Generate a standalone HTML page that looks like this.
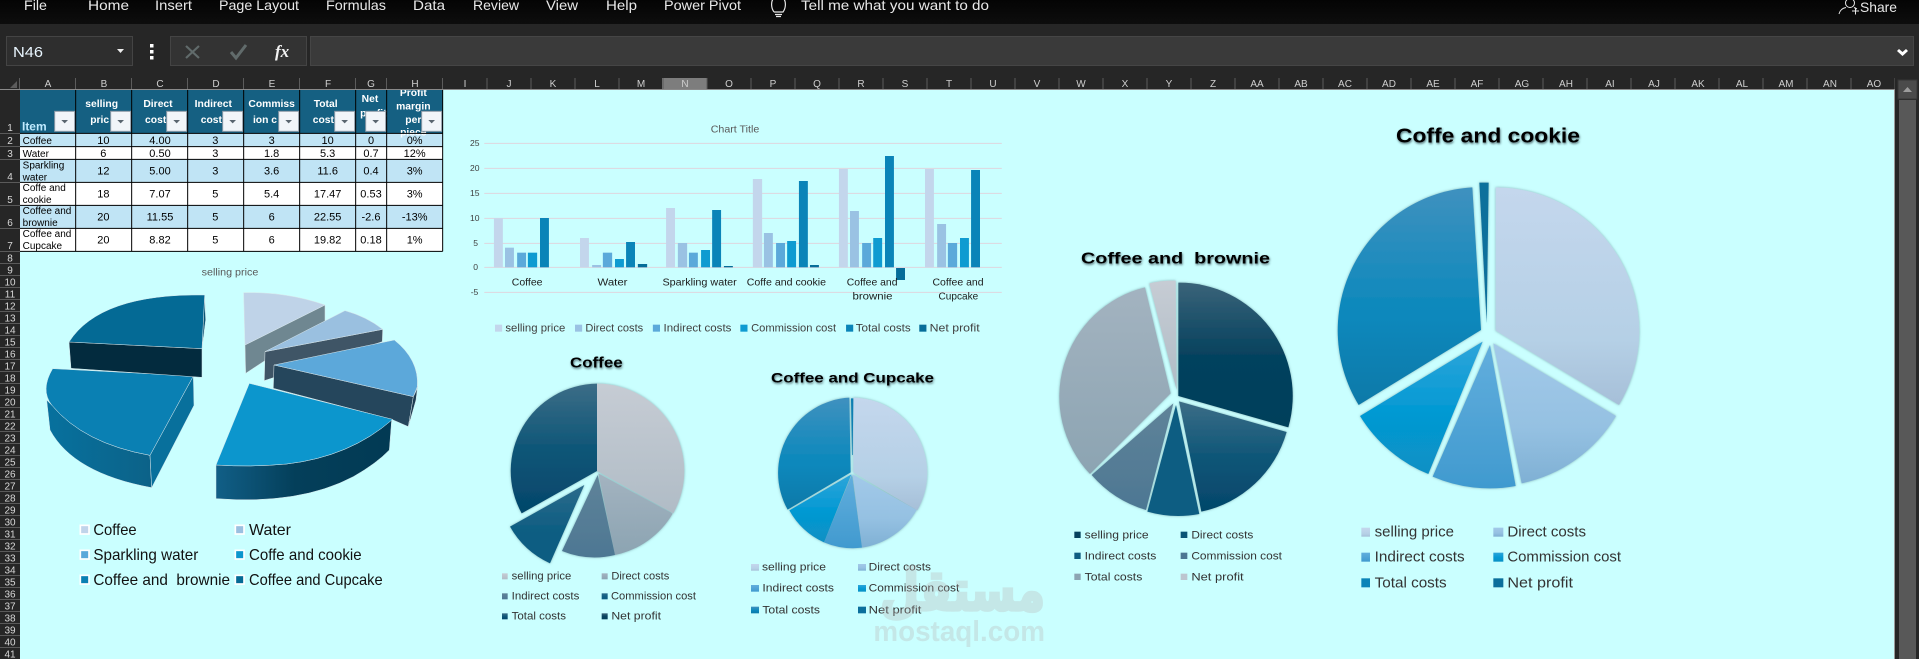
<!DOCTYPE html>
<html><head><meta charset="utf-8"><title>Excel</title>
<style>
html,body{margin:0;padding:0;width:1919px;height:659px;overflow:hidden;background:#262626}
svg{display:block;position:absolute;left:0;top:0}
text{font-family:"Liberation Sans",sans-serif}
.m{fill:#e8e8e8;font-size:14px}
.c{fill:#cfcfcf;font-size:10px;text-anchor:middle}
.r{fill:#d8d8d8;font-size:10px;text-anchor:middle}
.d{fill:#000;font-size:33px;text-anchor:middle}
.i{fill:#000;font-size:30px}
.h{fill:#fff;font-size:31px;font-weight:bold;text-anchor:middle}
.g{fill:#404040}
.t{fill:#000;font-weight:bold;filter:url(#ts)}
</style></head><body>
<svg width="1919" height="659" viewBox="0 0 1919 659" xmlns="http://www.w3.org/2000/svg">
<defs>
<linearGradient id="tb" x1="0" y1="0" x2="0" y2="1"><stop offset="0" stop-color="#040404"/><stop offset="1" stop-color="#0d0d0d"/></linearGradient>
<filter id="ts" x="-20%" y="-50%" width="140%" height="220%"><feDropShadow dx="2" dy="4" stdDeviation="3" flood-color="#2c3a40" flood-opacity=".75"/></filter>
<filter id="ps" x="-10%" y="-10%" width="120%" height="120%"><feDropShadow dx="0" dy="0" stdDeviation="4" flood-color="#4d7c84" flood-opacity=".6"/></filter>
<linearGradient id="a1" x1="0" y1="0" x2="0" y2="1"><stop offset="0" stop-color="#c6ccd4"/><stop offset="1" stop-color="#b0bcc6"/></linearGradient>
<linearGradient id="a2" x1="0" y1="0" x2="0" y2="1"><stop offset="0" stop-color="#a3b3c0"/><stop offset="1" stop-color="#8ca4b2"/></linearGradient>
<linearGradient id="a3" x1="0" y1="0" x2="0" y2="1"><stop offset="0" stop-color="#5f8399"/><stop offset="1" stop-color="#4d7793"/></linearGradient>
<linearGradient id="a4" x1="0" y1="0" x2="0" y2="1"><stop offset="0" stop-color="#2b6b8b"/><stop offset=".6" stop-color="#0d5d82"/><stop offset="1" stop-color="#0f5d82"/></linearGradient>
<linearGradient id="a5" x1="0" y1="0" x2="0" y2="1"><stop offset="0" stop-color="#3c6d87"/><stop offset=".55" stop-color="#0a5476"/><stop offset="1" stop-color="#05466a"/></linearGradient>
<linearGradient id="a6" x1="0" y1="0" x2="0" y2="1"><stop offset="0" stop-color="#3a6379"/><stop offset=".5" stop-color="#06425e"/><stop offset="1" stop-color="#053f5a"/></linearGradient>
<linearGradient id="b1" x1="0" y1="0" x2="0" y2="1"><stop offset="0" stop-color="#c4d7ed"/><stop offset=".7" stop-color="#b5d0e6"/><stop offset="1" stop-color="#a6bfd8"/></linearGradient>
<linearGradient id="b2" x1="0" y1="0" x2="0" y2="1"><stop offset="0" stop-color="#a2c9e9"/><stop offset=".6" stop-color="#95c1e2"/><stop offset="1" stop-color="#7fb0d4"/></linearGradient>
<linearGradient id="b3" x1="0" y1="0" x2="0" y2="1"><stop offset="0" stop-color="#62aedd"/><stop offset="1" stop-color="#409acf"/></linearGradient>
<linearGradient id="b4" x1="0" y1="0" x2="0" y2="1"><stop offset="0" stop-color="#2ea5da"/><stop offset=".5" stop-color="#059ad4"/><stop offset="1" stop-color="#0890c4"/></linearGradient>
<linearGradient id="b5" x1="0" y1="0" x2="0" y2="1"><stop offset="0" stop-color="#3f91bf"/><stop offset=".6" stop-color="#0988bc"/><stop offset="1" stop-color="#0b79a8"/></linearGradient>
<linearGradient id="s3" x1="0" y1="0" x2="1" y2="0"><stop offset="0" stop-color="#115f87"/><stop offset=".45" stop-color="#043f5a"/><stop offset="1" stop-color="#023a54"/></linearGradient>
<linearGradient id="s4" x1="0" y1="0" x2="1" y2="0"><stop offset="0" stop-color="#07719e"/><stop offset="1" stop-color="#0c6288"/></linearGradient>
<clipPath id="tc"><rect x="60" y="30" width="1268" height="484"/></clipPath>
</defs>

<!-- top bar -->
<rect width="1919" height="24" fill="url(#tb)"/>
<rect y="24" width="1919" height="54" fill="#262626"/>
<g class="mt">
<text class="m" x="24" y="10" textLength="23" lengthAdjust="spacingAndGlyphs">File</text>
<text class="m" x="88" y="10" textLength="41" lengthAdjust="spacingAndGlyphs">Home</text>
<text class="m" x="155" y="10" textLength="37" lengthAdjust="spacingAndGlyphs">Insert</text>
<text class="m" x="219" y="10" textLength="80" lengthAdjust="spacingAndGlyphs">Page Layout</text>
<text class="m" x="326" y="10" textLength="60" lengthAdjust="spacingAndGlyphs">Formulas</text>
<text class="m" x="413" y="10" textLength="32" lengthAdjust="spacingAndGlyphs">Data</text>
<text class="m" x="473" y="10" textLength="46" lengthAdjust="spacingAndGlyphs">Review</text>
<text class="m" x="546" y="10" textLength="32" lengthAdjust="spacingAndGlyphs">View</text>
<text class="m" x="606" y="10" textLength="31" lengthAdjust="spacingAndGlyphs">Help</text>
<text class="m" x="664" y="10" textLength="77" lengthAdjust="spacingAndGlyphs">Power Pivot</text>
<text class="m" x="801" y="10" textLength="188" lengthAdjust="spacingAndGlyphs">Tell me what you want to do</text>
<text class="m" x="1860" y="12" textLength="37" lengthAdjust="spacingAndGlyphs">Share</text>
</g>
<path d="M774 12 C771 8 771 2 773 -1 M784 -1 C786 2 786 8 783 12 L774 12" fill="none" stroke="#e8e8e8" stroke-width="1.2"/>
<path d="M775 14.5H782M776 16.5H781" stroke="#e8e8e8" stroke-width="1.2"/>
<circle cx="1850" cy="3" r="4.5" fill="none" stroke="#e8e8e8" stroke-width="1"/>
<path d="M1839 14 C1840 10 1843 8 1846 7.5 M1854 7.5 C1855 8 1856 8.5 1857 9" fill="none" stroke="#e8e8e8" stroke-width="1"/>
<path d="M1852 11H1859M1855.5 7.5V14.5" stroke="#e8e8e8" stroke-width="1"/>

<!-- formula bar -->
<rect x="6.5" y="36.5" width="126" height="29" fill="#2e2e2e" stroke="#444"/>
<text x="13" y="57" font-size="14.5" fill="#e9f6ff" textLength="30" lengthAdjust="spacingAndGlyphs">N46</text>
<path d="M117 49H124L120.500 53Z" fill="#eee"/>
<rect x="150" y="44" width="3.500" height="3.500" fill="#fff"/><rect x="150" y="50" width="3.500" height="3.500" fill="#fff"/><rect x="150" y="56" width="3.500" height="3.500" fill="#fff"/>
<rect x="170.500" y="36.500" width="136" height="29" fill="#333" stroke="#444"/>
<path d="M186 46L199 58M199 46L186 58" stroke="#616b6b" stroke-width="2.200"/>
<path d="M231 52L236 58L246 45" fill="none" stroke="#616b6b" stroke-width="3"/>
<text x="275" y="57" font-size="17" fill="#f2f2f2" style="font-family:'Liberation Serif',serif;font-style:italic;font-weight:bold">fx</text>
<rect x="310.500" y="36.500" width="1603" height="29" fill="#3a3a3a" stroke="#454545"/>
<path d="M1899 49L1902.500 52L1906 49L1908 51L1902.500 56L1897 51Z" fill="#fff"/>

<!-- column headers -->
<rect x="662" y="78" width="45" height="11" fill="#7d7d7d"/>
<path d="M17 81V88H10Z" fill="#5b5b5b"/>
<g stroke="#5c5c5c"><path d="M19.500 78V89M75.500 78V89M131.500 78V89M187.500 78V89M243.500 78V89M299.500 78V89M355.500 78V89M386.500 78V89M442.500 78V89M487 78V89M531 78V89M575 78V89M619 78V89M663 78V89M707 78V89M751 78V89M795 78V89M839 78V89M883 78V89M927 78V89M971 78V89M1015 78V89M1059 78V89M1103 78V89M1147 78V89M1191 78V89M1235 78V89M1279 78V89M1323 78V89M1367 78V89M1411 78V89M1455 78V89M1499 78V89M1543 78V89M1587 78V89M1631 78V89M1675 78V89M1719 78V89M1763 78V89M1807 78V89M1851 78V89M1895 78V89"/></g>
<g class="cols">
<text class="c" x="48" y="87">A</text><text class="c" x="104" y="87">B</text><text class="c" x="160" y="87">C</text><text class="c" x="216" y="87">D</text><text class="c" x="272" y="87">E</text><text class="c" x="328" y="87">F</text><text class="c" x="371" y="87">G</text><text class="c" x="415" y="87">H</text>
<text class="c" x="465" y="87">I</text><text class="c" x="509" y="87">J</text><text class="c" x="553" y="87">K</text><text class="c" x="597" y="87">L</text><text class="c" x="641" y="87">M</text><text class="c" x="685" y="87">N</text><text class="c" x="729" y="87">O</text><text class="c" x="773" y="87">P</text><text class="c" x="817" y="87">Q</text><text class="c" x="861" y="87">R</text><text class="c" x="905" y="87">S</text><text class="c" x="949" y="87">T</text><text class="c" x="993" y="87">U</text><text class="c" x="1037" y="87">V</text><text class="c" x="1081" y="87">W</text><text class="c" x="1125" y="87">X</text><text class="c" x="1169" y="87">Y</text><text class="c" x="1213" y="87">Z</text><text class="c" x="1257" y="87">AA</text><text class="c" x="1301" y="87">AB</text><text class="c" x="1345" y="87">AC</text><text class="c" x="1389" y="87">AD</text><text class="c" x="1433" y="87">AE</text><text class="c" x="1477" y="87">AF</text><text class="c" x="1522" y="87">AG</text><text class="c" x="1566" y="87">AH</text><text class="c" x="1610" y="87">AI</text><text class="c" x="1654" y="87">AJ</text><text class="c" x="1698" y="87">AK</text><text class="c" x="1742" y="87">AL</text><text class="c" x="1786" y="87">AM</text><text class="c" x="1830" y="87">AN</text><text class="c" x="1874" y="87">AO</text>
</g>
<rect x="0" y="89" width="1895" height="1" fill="#8a8a8a"/>

<!-- sheet -->
<rect x="20" y="90" width="1874" height="569" fill="#CAFFFF"/>
<rect x="1894" y="90" width="1" height="569" fill="#9a9a9a"/>

<!-- scrollbar -->
<rect x="1895" y="78" width="24" height="581" fill="#262626"/>
<rect x="1898" y="80" width="19" height="19" fill="#4b4b4b" stroke="#353535"/>
<path d="M1903 92L1907.500 87L1912 92Z" fill="#9c9c9c"/>
<rect x="1899" y="100" width="17" height="559" fill="#585858"/>

<!-- row header -->
<g stroke="#5a5a5a"><path d="M0 133.500H20M0 146.500H20M0 159.500H20M0 182.500H20M0 205.500H20M0 228.500H20M0 251.500H20M0 263.500H20M0 275.500H20M0 287.500H20M0 299.500H20M0 311.500H20M0 323.500H20M0 335.500H20M0 347.500H20M0 359.500H20M0 371.500H20M0 383.500H20M0 395.500H20M0 407.500H20M0 419.500H20M0 431.500H20M0 443.500H20M0 455.500H20M0 467.500H20M0 479.500H20M0 491.500H20M0 503.500H20M0 515.500H20M0 527.500H20M0 539.500H20M0 551.500H20M0 563.500H20M0 575.500H20M0 587.500H20M0 599.500H20M0 611.500H20M0 623.500H20M0 635.500H20M0 647.500H20"/></g>
<g>
<text class="r" x="10" y="131">1</text><text class="r" x="10" y="144">2</text><text class="r" x="10" y="157">3</text><text class="r" x="10" y="180">4</text><text class="r" x="10" y="203">5</text><text class="r" x="10" y="226">6</text><text class="r" x="10" y="249">7</text>
<text class="r" x="10" y="261.500">8</text><text class="r" x="10" y="273.500">9</text><text class="r" x="10" y="285.500">10</text><text class="r" x="10" y="297.500">11</text><text class="r" x="10" y="309.500">12</text><text class="r" x="10" y="321.500">13</text><text class="r" x="10" y="333.500">14</text><text class="r" x="10" y="345.500">15</text><text class="r" x="10" y="357.500">16</text><text class="r" x="10" y="369.500">17</text><text class="r" x="10" y="381.500">18</text><text class="r" x="10" y="393.500">19</text><text class="r" x="10" y="405.500">20</text><text class="r" x="10" y="417.500">21</text><text class="r" x="10" y="429.500">22</text><text class="r" x="10" y="441.500">23</text><text class="r" x="10" y="453.500">24</text><text class="r" x="10" y="465.500">25</text><text class="r" x="10" y="477.500">26</text><text class="r" x="10" y="489.500">27</text><text class="r" x="10" y="501.500">28</text><text class="r" x="10" y="513.500">29</text><text class="r" x="10" y="525.500">30</text><text class="r" x="10" y="537.500">31</text><text class="r" x="10" y="549.500">32</text><text class="r" x="10" y="561.500">33</text><text class="r" x="10" y="573.500">34</text><text class="r" x="10" y="585.500">35</text><text class="r" x="10" y="597.500">36</text><text class="r" x="10" y="609.500">37</text><text class="r" x="10" y="621.500">38</text><text class="r" x="10" y="633.500">39</text><text class="r" x="10" y="645.500">40</text><text class="r" x="10" y="657.500">41</text>
</g>

<!-- table -->
<g transform="translate(0,80) scale(.33333)">
<rect x="60" y="30" width="1268" height="130" fill="#156082"/>
<rect x="60" y="160" width="1268" height="40" fill="#C0E4F5"/>
<rect x="60" y="200" width="1268" height="38" fill="#fff"/>
<rect x="60" y="238" width="1268" height="69" fill="#C0E4F5"/>
<rect x="60" y="307" width="1268" height="69" fill="#fff"/>
<rect x="60" y="376" width="1268" height="69" fill="#C0E4F5"/>
<rect x="60" y="445" width="1268" height="69" fill="#fff"/>
<g clip-path="url(#tc)">
<text x="66" y="152" font-size="36" font-weight="bold" fill="#bfeaff" textLength="74" lengthAdjust="spacingAndGlyphs">Item</text>
<text class="h" x="305" y="81">selling</text><text class="h" x="299" y="129">pric</text>
<text class="h" x="474" y="81">Direct</text><text class="h" x="467" y="129">cost</text>
<text class="h" x="640" y="81">Indirect</text><text class="h" x="634" y="129">cost</text>
<text class="h" x="815" y="81">Commiss</text><text class="h" x="795" y="129">ion c</text>
<text class="h" x="977" y="81">Total</text><text class="h" x="970" y="129">cost</text>
<text class="h" x="1110" y="66">Net</text><text class="h" x="1120" y="110">profit</text>
<text class="h" x="1240" y="48">Profit</text><text class="h" x="1240" y="88">margin</text><text class="h" x="1240" y="129">per</text><text class="h" x="1240" y="166">piece</text>
</g>
<g fill="#f1f5f9" stroke="#8f9ca8" stroke-width="3">
<rect x="164" y="94" width="60" height="60"/><rect x="332" y="94" width="60" height="60"/><rect x="500" y="94" width="60" height="60"/><rect x="668" y="94" width="60" height="60"/><rect x="836" y="94" width="60" height="60"/><rect x="1004" y="94" width="60" height="60"/><rect x="1097" y="94" width="60" height="60"/><rect x="1265" y="94" width="60" height="60"/>
</g>
<g fill="#59656f"><path d="M184 120H204L194 130Z"/><path d="M352 120H372L362 130Z"/><path d="M520 120H540L530 130Z"/><path d="M688 120H708L698 130Z"/><path d="M856 120H876L866 130Z"/><path d="M1024 120H1044L1034 130Z"/><path d="M1117 120H1137L1127 130Z"/><path d="M1285 120H1305L1295 130Z"/></g>
<g stroke="#000" stroke-width="3" fill="none">
<path d="M60 160H1328M60 200H1328M60 238H1328M60 307H1328M60 376H1328M60 445H1328M60 514H1328"/>
<path d="M227 30V514M395 30V514M563 30V514M731 30V514M899 30V514M1067 30V514M1160 30V514M1328 30V514"/>
</g>
<text class="i" x="68" y="192">Coffee</text><text class="i" x="68" y="231">Water</text>
<text class="i" x="68" y="265">Sparkling</text><text class="i" x="68" y="301">water</text>
<text class="i" x="68" y="333">Coffe and</text><text class="i" x="68" y="369">cookie</text>
<text class="i" x="68" y="402">Coffee and</text><text class="i" x="68" y="438">brownie</text>
<text class="i" x="68" y="471">Coffee and</text><text class="i" x="68" y="507">Cupcake</text>
<text class="d" x="310" y="192">10</text><text class="d" x="480" y="192">4.00</text><text class="d" x="646" y="192">3</text><text class="d" x="815" y="192">3</text><text class="d" x="983" y="192">10</text><text class="d" x="1113" y="192">0</text><text class="d" x="1244" y="192">0%</text>
<text class="d" x="310" y="231">6</text><text class="d" x="480" y="231">0.50</text><text class="d" x="646" y="231">3</text><text class="d" x="815" y="231">1.8</text><text class="d" x="983" y="231">5.3</text><text class="d" x="1113" y="231">0.7</text><text class="d" x="1244" y="231">12%</text>
<text class="d" x="310" y="284">12</text><text class="d" x="480" y="284">5.00</text><text class="d" x="646" y="284">3</text><text class="d" x="815" y="284">3.6</text><text class="d" x="983" y="284">11.6</text><text class="d" x="1113" y="284">0.4</text><text class="d" x="1244" y="284">3%</text>
<text class="d" x="310" y="353">18</text><text class="d" x="480" y="353">7.07</text><text class="d" x="646" y="353">5</text><text class="d" x="815" y="353">5.4</text><text class="d" x="983" y="353">17.47</text><text class="d" x="1113" y="353">0.53</text><text class="d" x="1244" y="353">3%</text>
<text class="d" x="310" y="422">20</text><text class="d" x="480" y="422">11.55</text><text class="d" x="646" y="422">5</text><text class="d" x="815" y="422">6</text><text class="d" x="983" y="422">22.55</text><text class="d" x="1113" y="422">-2.6</text><text class="d" x="1244" y="422">-13%</text>
<text class="d" x="310" y="491">20</text><text class="d" x="480" y="491">8.82</text><text class="d" x="646" y="491">5</text><text class="d" x="815" y="491">6</text><text class="d" x="983" y="491">19.82</text><text class="d" x="1113" y="491">0.18</text><text class="d" x="1244" y="491">1%</text>
</g>

<!-- 3D pie -->
<g transform="translate(0,260) scale(.33333)">
<text x="605" y="47" font-size="30" fill="#595959" textLength="170" lengthAdjust="spacingAndGlyphs">selling price</text>
<g stroke="#d8e6ea" stroke-width="1.500">
<path d="M735 255L975 135L975 183L737 340Z" fill="#6f8791"/>
<path d="M735 255L731 98Q860 95 975 135Z" fill="#BFD3E8"/>
<path d="M795 275L1148 208L1147 245L793 362Z" fill="#3f5566"/>
<path d="M795 275L1035 152Q1100 170 1148 208Z" fill="#9AC0E0"/>
<path d="M822 315L1240 410L1225 500L1175 478L820 385Z" fill="#25465c"/>
<path d="M1240 410Q1250 392 1253 378L1248 420L1225 500Z" fill="#1d3d52"/>
<path d="M822 315L1183 240Q1258 300 1252 380L1240 410Z" fill="#5CA8DA"/>
<path d="M648 615L648 716Q900 735 1060 650Q1130 610 1168 570L1175 480Q1050 590 860 612Q750 622 648 615Z" fill="url(#s3)"/>
<path d="M748 370L1178 478Q1050 590 860 612Q750 622 648 615Z" fill="#0C96CD"/>
<path d="M140 420L150 510Q220 640 455 683L450 586Q250 550 155 435Z" fill="url(#s4)"/>
<path d="M450 586L580 348L582 436L455 683Z" fill="#08709c"/>
<path d="M158 326L580 348L450 586Q250 550 155 435Q120 390 158 326Z" fill="#0A80B3"/>
<path d="M207 246L606 266L606 352L213 325Z" fill="#032b3e"/>
<path d="M614 105L617 180L606 266Z" fill="#0a5474"/>
<path d="M207 246Q300 100 614 105L606 266Z" fill="#046a95"/>
</g>
<g stroke="#fff" stroke-width="5">
<rect x="241" y="796" width="26" height="26" fill="#C0D4EA"/><rect x="706" y="796" width="26" height="26" fill="#9AC0E0"/>
<rect x="241" y="871" width="26" height="26" fill="#5CA8DA"/><rect x="706" y="871" width="26" height="26" fill="#0C96CD"/>
<rect x="241" y="946" width="26" height="26" fill="#0A80B3"/><rect x="706" y="946" width="26" height="26" fill="#046a95"/>
</g>
<g font-size="47" fill="#111">
<text x="280" y="825" textLength="130" lengthAdjust="spacingAndGlyphs">Coffee</text>
<text x="747" y="825" textLength="126" lengthAdjust="spacingAndGlyphs">Water</text>
<text x="280" y="900" textLength="315" lengthAdjust="spacingAndGlyphs">Sparkling water</text>
<text x="747" y="900" textLength="338" lengthAdjust="spacingAndGlyphs">Coffe and cookie</text>
<text x="280" y="975" textLength="410" lengthAdjust="spacingAndGlyphs" xml:space="preserve">Coffee and  brownie</text>
<text x="747" y="975" textLength="401" lengthAdjust="spacingAndGlyphs">Coffee and Cupcake</text>
</g>
</g>

<!-- bar chart -->
<g transform="translate(460,110) scale(.35714,.33333)">
<text x="702" y="68" font-size="30" fill="#595959" textLength="136" lengthAdjust="spacingAndGlyphs">Chart Title</text>
<g stroke="#dfd6de" stroke-width="3"><path d="M68 100H1517M68 175H1517M68 250H1517M68 325H1517M68 400H1517M68 472H1517M68 547H1517"/></g>
<g font-size="24" fill="#404040">
<text x="28" y="108">25</text><text x="28" y="183">20</text><text x="28" y="258">15</text><text x="28" y="333">10</text><text x="37" y="408">5</text><text x="37" y="480">0</text><text x="30" y="555">-5</text>
</g>
<g fill="#C3D6EC"><rect x="95" y="325" width="25" height="147"/><rect x="336" y="384" width="25" height="88"/><rect x="577" y="294" width="25" height="178"/><rect x="820" y="207" width="26" height="265"/><rect x="1061" y="177" width="25" height="295"/><rect x="1302" y="177" width="25" height="295"/></g>
<g fill="#9AC2E3"><rect x="126" y="413" width="25" height="59"/><rect x="370" y="465" width="25" height="7"/><rect x="610" y="399" width="26" height="73"/><rect x="851" y="369" width="25" height="103"/><rect x="1092" y="303" width="25" height="169"/><rect x="1336" y="342" width="25" height="130"/></g>
<g fill="#5BA9DA"><rect x="160" y="428" width="25" height="44"/><rect x="400" y="428" width="26" height="44"/><rect x="641" y="428" width="25" height="44"/><rect x="885" y="399" width="25" height="73"/><rect x="1126" y="399" width="25" height="73"/><rect x="1366" y="399" width="26" height="73"/></g>
<g fill="#0E9BD1"><rect x="190" y="428" width="26" height="44"/><rect x="434" y="447" width="25" height="25"/><rect x="675" y="420" width="25" height="52"/><rect x="916" y="393" width="25" height="79"/><rect x="1157" y="384" width="25" height="88"/><rect x="1400" y="384" width="25" height="88"/></g>
<g fill="#0A84B8"><rect x="224" y="324" width="25" height="148"/><rect x="465" y="396" width="25" height="76"/><rect x="706" y="300" width="25" height="172"/><rect x="949" y="213" width="25" height="259"/><rect x="1190" y="138" width="25" height="334"/><rect x="1431" y="180" width="25" height="292"/></g>
<g fill="#056D99"><rect x="498" y="462" width="26" height="10"/><rect x="739" y="468" width="25" height="4"/><rect x="980" y="465" width="25" height="7"/><rect x="1221" y="474" width="25" height="36"/></g>
<g font-size="31" fill="#1c1c1c">
<text x="145" y="527" textLength="86" lengthAdjust="spacingAndGlyphs">Coffee</text>
<text x="385" y="527" textLength="84" lengthAdjust="spacingAndGlyphs">Water</text>
<text x="567" y="527" textLength="208" lengthAdjust="spacingAndGlyphs">Sparkling water</text>
<text x="803" y="527" textLength="222" lengthAdjust="spacingAndGlyphs">Coffe and cookie</text>
<text x="1083" y="527" textLength="142" lengthAdjust="spacingAndGlyphs">Coffee and</text>
<text x="1099" y="568" textLength="112" lengthAdjust="spacingAndGlyphs">brownie</text>
<text x="1323" y="527" textLength="143" lengthAdjust="spacingAndGlyphs">Coffee and</text>
<text x="1340" y="568" textLength="111" lengthAdjust="spacingAndGlyphs">Cupcake</text>
</g>
<rect x="98" y="644" width="20" height="21" fill="#C3D6EC"/><rect x="322" y="644" width="20" height="21" fill="#9AC2E3"/><rect x="540" y="644" width="20" height="21" fill="#5BA9DA"/><rect x="785" y="644" width="20" height="21" fill="#0E9BD1"/><rect x="1081" y="644" width="20" height="21" fill="#0A84B8"/><rect x="1286" y="644" width="20" height="21" fill="#056D99"/>
<g font-size="32" fill="#404040">
<text x="127" y="665" textLength="168" lengthAdjust="spacingAndGlyphs">selling price</text>
<text x="351" y="665" textLength="162" lengthAdjust="spacingAndGlyphs">Direct costs</text>
<text x="570" y="665" textLength="190" lengthAdjust="spacingAndGlyphs">Indirect costs</text>
<text x="815" y="665" textLength="238" lengthAdjust="spacingAndGlyphs">Commission cost</text>
<text x="1108" y="665" textLength="154" lengthAdjust="spacingAndGlyphs">Total costs</text>
<text x="1315" y="665" textLength="140" lengthAdjust="spacingAndGlyphs">Net profit</text>
</g>
</g>

<!-- Coffee pie -->
<g transform="translate(480,345) scale(.33333)">
<text class="t" x="270" y="68" font-size="44" textLength="158" lengthAdjust="spacingAndGlyphs">Coffee</text>
<g filter="url(#ps)">
<path d="M351 378L351 116A262 262 0 0 1 580 505Z" fill="url(#a1)"/>
<path d="M355 385L578 506A262 262 0 0 1 405 630Z" fill="url(#a2)"/>
<path d="M353 390L405 630A262 262 0 0 1 246 618Z" fill="url(#a3)"/>
<path d="M313 420L210 655A262 262 0 0 1 90 545Z" fill="url(#a4)"/>
<path d="M351 378L125 505A262 262 0 0 1 351 116Z" fill="url(#a5)"/>
</g>
<rect x="66" y="685" width="17" height="18" fill="url(#a1)"/><rect x="365" y="685" width="18" height="18" fill="url(#a2)"/>
<rect x="66" y="745" width="17" height="18" fill="url(#a3)"/><rect x="365" y="745" width="18" height="18" fill="url(#a4)"/>
<rect x="66" y="805" width="17" height="18" fill="url(#a5)"/><rect x="365" y="805" width="18" height="18" fill="url(#a6)"/>
<g font-size="32" fill="#333">
<text x="95" y="704" textLength="179" lengthAdjust="spacingAndGlyphs">selling price</text>
<text x="394" y="704" textLength="174" lengthAdjust="spacingAndGlyphs">Direct costs</text>
<text x="95" y="764" textLength="203" lengthAdjust="spacingAndGlyphs">Indirect costs</text>
<text x="393" y="764" textLength="255" lengthAdjust="spacingAndGlyphs">Commission cost</text>
<text x="95" y="824" textLength="163" lengthAdjust="spacingAndGlyphs">Total costs</text>
<text x="394" y="824" textLength="149" lengthAdjust="spacingAndGlyphs">Net profit</text>
</g>
</g>

<!-- Cupcake pie -->
<g transform="translate(730,355) scale(.33333)">
<text class="t" x="123" y="83" font-size="42" textLength="489" lengthAdjust="spacingAndGlyphs">Coffee and Cupcake</text>
<g filter="url(#ps)">
<path d="M370 352L370 128A226 226 0 0 1 562 466Z" fill="url(#b1)"/>
<path d="M368 358L560 465A226 226 0 0 1 396 578Z" fill="url(#b2)"/>
<path d="M366 358L396 578A226 226 0 0 1 282 562Z" fill="url(#b3)"/>
<path d="M364 358L282 562A226 226 0 0 1 178 466Z" fill="url(#b4)"/>
<path d="M362 352L173 464A226 226 0 0 1 358 128Z" fill="url(#b5)"/>
<path d="M366 300L363 130L370 130L368 300Z" fill="#0a7fb2"/>
</g>
<rect x="63" y="627" width="24" height="20" fill="url(#b1)"/><rect x="384" y="627" width="24" height="20" fill="url(#b2)"/>
<rect x="63" y="690" width="24" height="20" fill="url(#b3)"/><rect x="384" y="690" width="24" height="20" fill="url(#b4)"/>
<rect x="63" y="755" width="24" height="20" fill="url(#b5)"/><rect x="384" y="755" width="24" height="20" fill="#0b6f9c"/>
<g font-size="33" fill="#333">
<text x="96" y="647" textLength="192" lengthAdjust="spacingAndGlyphs">selling price</text>
<text x="416" y="647" textLength="187" lengthAdjust="spacingAndGlyphs">Direct costs</text>
<text x="97" y="710" textLength="215" lengthAdjust="spacingAndGlyphs">Indirect costs</text>
<text x="416" y="710" textLength="272" lengthAdjust="spacingAndGlyphs">Commission cost</text>
<text x="97" y="776" textLength="173" lengthAdjust="spacingAndGlyphs">Total costs</text>
<text x="416" y="776" textLength="158" lengthAdjust="spacingAndGlyphs">Net profit</text>
</g>
</g>

<!-- Brownie pie -->
<g transform="translate(1040,230) scale(.33333)">
<text class="t" x="123" y="100" font-size="46" textLength="567" lengthAdjust="spacingAndGlyphs" xml:space="preserve">Coffee and  brownie</text>
<g filter="url(#ps)">
<path d="M415 498L415 158A340 340 0 0 1 745 592Z" fill="url(#a6)"/>
<path d="M417 514L740 606A340 340 0 0 1 484 845Z" fill="url(#a5)"/>
<path d="M408 525L478 852A340 340 0 0 1 322 845Z" fill="#0f5d82"/>
<path d="M400 520L318 840A345 345 0 0 1 155 735Z" fill="url(#a3)"/>
<path d="M392 490L150 732A338 338 0 0 1 315 172Z" fill="url(#a2)"/>
<path d="M410 480L328 160A340 340 0 0 1 407 152Z" fill="url(#a1)"/>
</g>
<rect x="103" y="905" width="19" height="19" fill="#06425e"/><rect x="422" y="905" width="20" height="19" fill="#0a5476"/>
<rect x="103" y="968" width="19" height="19" fill="#0f5d82"/><rect x="422" y="968" width="20" height="19" fill="#4d7793"/>
<rect x="103" y="1031" width="19" height="19" fill="#8ca4b2"/><rect x="422" y="1031" width="20" height="19" fill="#bcc5cf"/>
<g font-size="33" fill="#333">
<text x="134" y="926" textLength="192" lengthAdjust="spacingAndGlyphs">selling price</text>
<text x="454" y="926" textLength="186" lengthAdjust="spacingAndGlyphs">Direct costs</text>
<text x="134" y="989" textLength="215" lengthAdjust="spacingAndGlyphs">Indirect costs</text>
<text x="454" y="989" textLength="272" lengthAdjust="spacingAndGlyphs">Commission cost</text>
<text x="134" y="1052" textLength="173" lengthAdjust="spacingAndGlyphs">Total costs</text>
<text x="454" y="1052" textLength="157" lengthAdjust="spacingAndGlyphs">Net profit</text>
</g>
</g>

<!-- Cookie pie -->
<g transform="translate(1320,110) scale(.33333)">
<text class="t" x="228" y="97" font-size="60" textLength="552" lengthAdjust="spacingAndGlyphs">Coffe and cookie</text>
<g filter="url(#ps)">
<path d="M527 662L527 232A432 432 0 0 1 897 885Z" fill="url(#b1)"/>
<path d="M520 700L888 918A430 430 0 0 1 605 1120Z" fill="url(#b2)"/>
<path d="M510 705L587 1128A430 430 0 0 1 338 1100Z" fill="url(#b3)"/>
<path d="M488 695L325 1092A430 430 0 0 1 120 918Z" fill="url(#b4)"/>
<path d="M483 660L116 885A430 430 0 0 1 457 232Z" fill="url(#b5)"/>
<path d="M500 640L478 218A430 430 0 0 1 506 218Z" fill="#0b6f9c"/>
</g>
<rect x="124" y="1253" width="26" height="27" fill="url(#b1)"/><rect x="520" y="1253" width="30" height="27" fill="url(#b2)"/>
<rect x="124" y="1328" width="26" height="27" fill="url(#b3)"/><rect x="520" y="1328" width="30" height="27" fill="url(#b4)"/>
<rect x="124" y="1405" width="26" height="27" fill="#0a84b8"/><rect x="520" y="1405" width="30" height="27" fill="#0b6f9c"/>
<g font-size="43" fill="#333">
<text x="164" y="1280" textLength="238" lengthAdjust="spacingAndGlyphs">selling price</text>
<text x="562" y="1280" textLength="236" lengthAdjust="spacingAndGlyphs">Direct costs</text>
<text x="164" y="1355" textLength="270" lengthAdjust="spacingAndGlyphs">Indirect costs</text>
<text x="562" y="1355" textLength="341" lengthAdjust="spacingAndGlyphs">Commission cost</text>
<text x="164" y="1433" textLength="216" lengthAdjust="spacingAndGlyphs">Total costs</text>
<text x="562" y="1433" textLength="197" lengthAdjust="spacingAndGlyphs">Net profit</text>
</g>
</g>

<!-- watermark -->
<g transform="translate(730,355) scale(.33333)" opacity=".3" fill="#b7b2b2">
<text x="450" y="765" font-size="170" font-weight="bold" stroke="#b7b2b2" stroke-width="10" textLength="495" lengthAdjust="spacingAndGlyphs" style="font-family:'DejaVu Sans',sans-serif">مستقل</text>
<text x="430" y="858" font-size="86" font-weight="bold" textLength="515" lengthAdjust="spacingAndGlyphs">mostaql.com</text>
</g>
</svg>
</body></html>
